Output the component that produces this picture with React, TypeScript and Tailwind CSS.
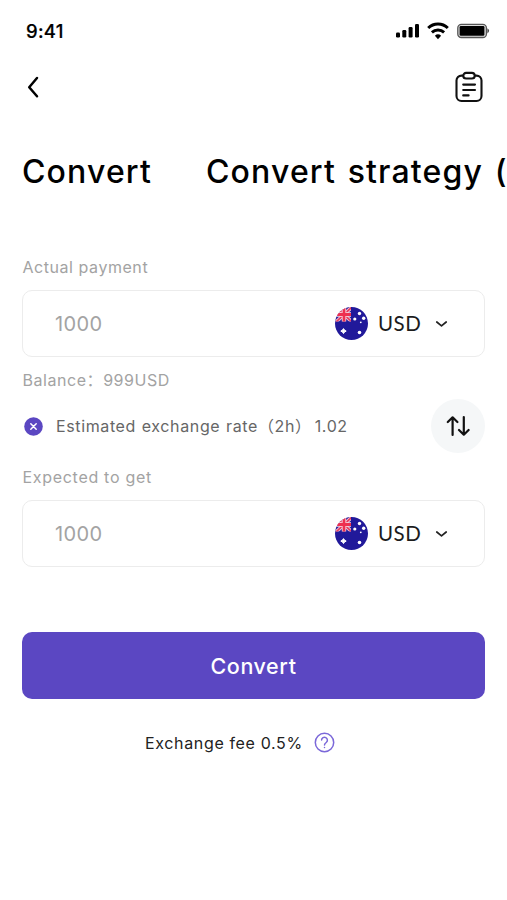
const tabs = ["Convert", "Convert strategy ("];

function StatusBar() {
  return (
    <div className="flex h-[62px] items-center justify-between pl-[26px] pr-[17px]">
      <span className="text-[18.5px] font-medium leading-6 tracking-[0.3px] [-webkit-text-stroke:0.2px_#000]">9:41</span>
      <div className="flex items-center">
        <svg width="24" height="16" viewBox="0 0 24 16">
          <rect x="0" y="9.5" width="4" height="5" rx="1.2" />
          <rect x="6.3" y="7" width="4" height="7.5" rx="1.2" />
          <rect x="12.6" y="4" width="4" height="10.5" rx="1.2" />
          <rect x="19" y="1" width="4" height="13.5" rx="1.2" />
        </svg>
        <svg className="ml-[7px]" width="22" height="18" viewBox="0 0 22 18" fill="none" stroke="#000">
          <path d="M1.2 6a14 14 0 0 1 19.6 0" strokeWidth="3" />
          <path d="M4.9 10.4a8.8 8.8 0 0 1 12.2 0" strokeWidth="2.9" />
          <path d="M11 17.2l-3.1-3.4a4.5 4.5 0 0 1 6.2 0z" fill="#000" stroke="none" />
        </svg>
        <svg className="ml-[8px]" width="33" height="16" viewBox="0 0 33 16">
          <rect x="0.8" y="1.3" width="28.6" height="13.2" rx="3.6" fill="#ddd" stroke="#555" strokeWidth="1.3" />
          <rect x="2.6" y="3" width="24.8" height="9.8" rx="1.2" />
          <path d="M30.4 5.2q3.4 2.6 0 5.4z" fill="#444" />
        </svg>
      </div>
    </div>
  );
}

function NavBar() {
  return (
    <div className="flex h-[50px] items-center justify-between pl-[26px] pr-[23px]">
      <svg width="14" height="24" viewBox="0 0 14 24" fill="none" stroke="#000" strokeWidth="2.5" strokeLinecap="round" strokeLinejoin="round">
        <path d="M11 3L3.2 12.2 11 21.3" />
      </svg>
      <svg width="30" height="32" viewBox="0 0 30 32" fill="none" stroke="#111" strokeWidth="2.1" strokeLinecap="round" strokeLinejoin="round">
        <path d="M9 4.6H7.5a5 5 0 0 0-5 5V25a5 5 0 0 0 5 5h15a5 5 0 0 0 5-5V9.6a5 5 0 0 0-5-5H21" />
        <rect x="9.3" y="1.9" width="11.4" height="5.6" rx="2.8" />
        <path d="M9.2 13.6h11.8M9.2 19h11.8M9.2 24.4h5.4" />
      </svg>
    </div>
  );
}

function Flag() {
  return (
    <svg width="33" height="33" viewBox="0 0 33 33">
      <defs>
        <clipPath id="disc">
          <circle cx="16.5" cy="16.5" r="16.5" />
        </clipPath>
        <clipPath id="canton">
          <rect width="16" height="14.5" />
        </clipPath>
      </defs>
      <g clipPath="url(#disc)">
        <rect width="33" height="33" fill="#21199a" />
        <g clipPath="url(#canton)">
          <path d="M1 0L17 15M17 0L1 15" stroke="#eeb5cc" strokeWidth="3.6" />
          <path d="M1 0L17 15M17 0L1 15" stroke="#e5395b" strokeWidth="1.6" />
          <path d="M9 0V15M0 7.5H16" stroke="#f8dbe4" strokeWidth="4.4" />
          <path d="M9 0V15M0 7.5H16" stroke="#ee2f50" strokeWidth="2.8" />
        </g>
        <g fill="#fff">
          <path d="M8.5 21.6l1 1.5 1.700 1-1.700 1-1 1.500-1-1.500-1.700-1 1.700-1z" stroke="#fff" strokeWidth="1" strokeLinejoin="round" />
          <circle cx="24.5" cy="6.5" r="1.7" />
          <circle cx="19.8" cy="12" r="1.6" />
          <circle cx="28.7" cy="11.2" r="1.7" />
          <circle cx="25.8" cy="15.3" r="0.9" />
          <circle cx="24.5" cy="25.5" r="1.8" />
        </g>
      </g>
    </svg>
  );
}

function AmountField() {
  return (
    <div className="flex h-[67px] items-center rounded-[10px] border-[1.5px] border-[#ececec] pl-[32px] pr-[36px]">
      <span className="flex-1 text-[20px] tracking-[0.4px] text-[#a3a3a3]">1000</span>
      <Flag />
      <span className="mb-0.5 ml-[10px] w-[43px] font-[Lato,sans-serif] text-[20.5px] tracking-[0.5px] text-[#1c1c1c]">USD</span>
      <svg className="ml-[14px]" width="13" height="8" viewBox="0 0 13 8" fill="none" stroke="#222" strokeWidth="1.7" strokeLinecap="round" strokeLinejoin="round">
        <path d="M1.8 2l4.7 3.8L11.2 2" />
      </svg>
    </div>
  );
}

export default function App() {
  return (
    <div className="h-[900px] w-full overflow-hidden bg-white font-[Inter,'Noto_Sans_CJK_SC',sans-serif] text-black">
      <StatusBar />
      <NavBar />

      <div className="mt-[40px] flex h-10 items-center gap-[54px] whitespace-nowrap pl-[22px] text-[32px] font-medium">
        {tabs.map((tab) => (
          <span key={tab} className="tracking-[1.15px] [word-spacing:2px]">{tab}</span>
        ))}
      </div>

      <main className="mt-[63px] w-[485px] pl-[22px] text-[16px] leading-6 text-[#a3a3a3]">
        <p className="mb-[11px] pl-[0.5px] tracking-[0.55px]">Actual payment</p>
        <AmountField />
        <p className="mt-[11px] pl-[0.5px] tracking-[0.55px]">Balance：999USD</p>

        <div className="mt-[7px] flex h-[54px] items-center">
          <svg className="ml-[2px]" width="19" height="19" viewBox="0 0 19 19">
            <circle cx="9.5" cy="9.5" r="9.3" fill="#5b47c2" />
            <path d="M6.8 6.8l5.4 5.4M12.2 6.8l-5.4 5.4" stroke="#fff" strokeWidth="1.5" strokeLinecap="round" />
          </svg>
          <span className="ml-[13px] flex-1 whitespace-nowrap tracking-[0.62px] text-[#666] [word-spacing:0.7px]">
            Estimated exchange rate<span className="mr-[3px]">（2h）</span>1.02
          </span>
          <div className="flex size-[54px] items-center justify-center rounded-full bg-[#f5f7f8]">
            <svg width="24" height="22" viewBox="0 0 24 22" fill="none" stroke="#111" strokeWidth="2.2" strokeLinecap="round" strokeLinejoin="round">
              <path d="M6.6 20V2.5M1.8 7l4.8-4.7L11.4 7M17.8 2v17.5M13 15l4.8 4.7L22.6 15" />
            </svg>
          </div>
        </div>

        <p className="mb-[11px] mt-[12px] pl-[0.5px] tracking-[0.7px]">Expected to get</p>
        <AmountField />

        <button className="mt-[65px] h-[67px] w-full rounded-[10px] bg-[#5b47c2] text-[21.5px] font-medium tracking-[0.6px] text-white">Convert</button>
      </main>

      <div className="mt-[33px] flex h-[22px] items-center pl-[145px] text-[16px] text-[#222]">
        <span className="tracking-[0.65px]">Exchange fee 0.5%</span>
        <svg className="-mt-px ml-[11px]" width="21" height="21" viewBox="0 0 21 21" fill="none" stroke="#7b68d9" strokeWidth="1.5" strokeLinecap="round">
          <circle cx="10.5" cy="10.5" r="9.2" />
          <path d="M7.6 8.1a2.9 2.9 0 1 1 4.6 2.4c-1 .7-1.7 1.2-1.7 2.4" />
          <path d="M10.5 15.5v.1" />
        </svg>
      </div>
    </div>
  );
}
